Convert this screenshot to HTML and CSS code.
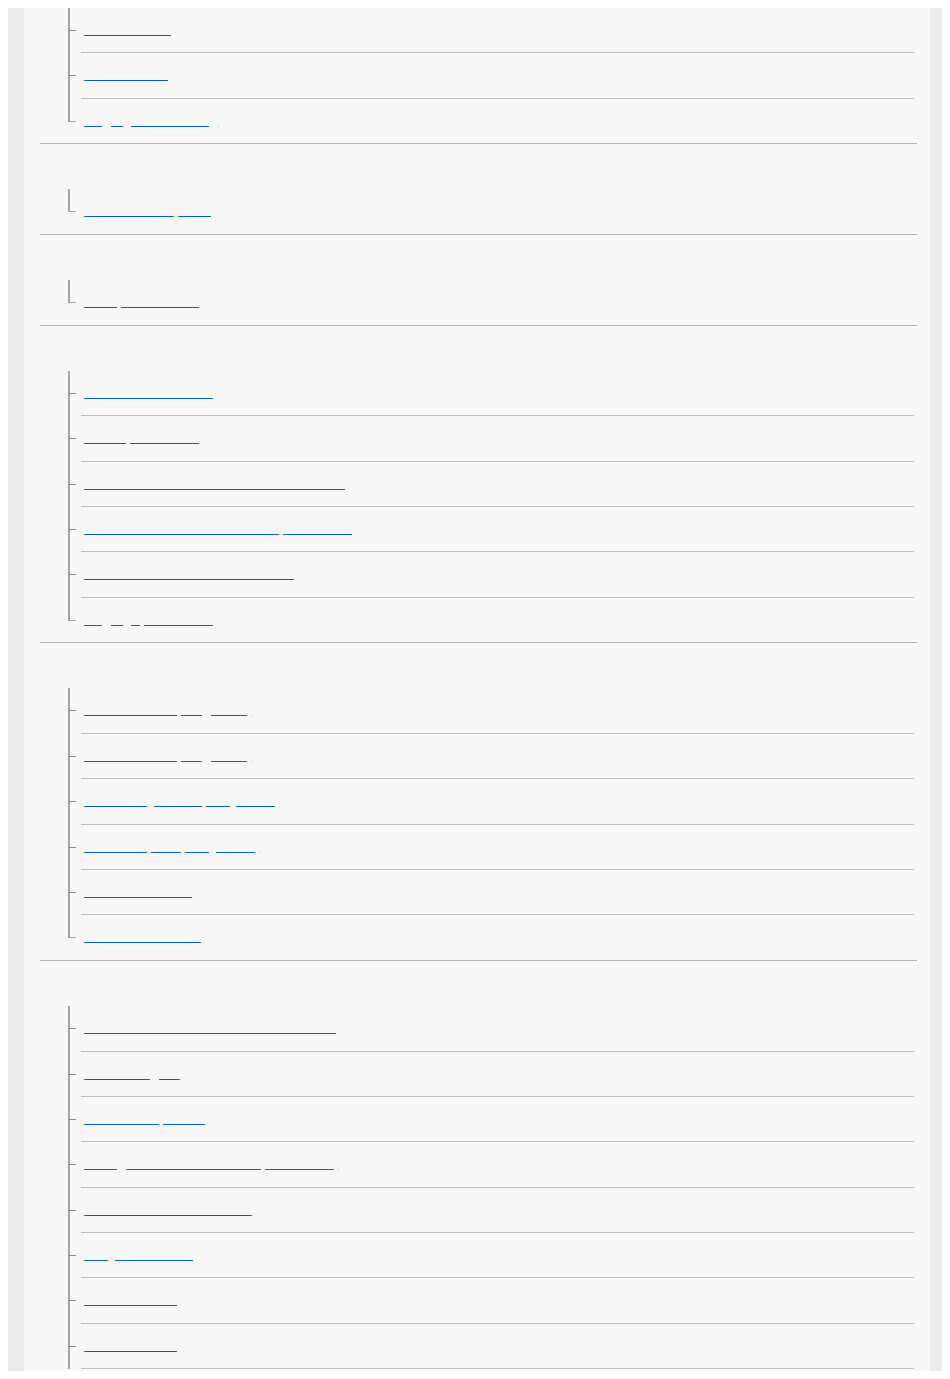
FILE: index.html
```html
<!DOCTYPE html>
<html lang="en">
<head>
    <meta charset="UTF-8">
    <meta content="width=device-width, initial-scale=1.0" name="viewport">
    <title>Help Guide</title>
    <link rel="stylesheet" href="styles.css">
</head>
<body>
<div class="help-frame">
    <div class="help-panel">
        <section class="toc-group cont">
            <ul class="toc-list">
                <li class="toc-item"><div class="toc-row"><a class="link" href="#"><span class="seg">abcdefghijabcdefghijabcdefghi</span></a></div></li>
                <li class="toc-item"><div class="toc-row"><a class="link" href="#"><span class="seg">abcdefghijabcdefghijabcdefgh</span></a></div></li>
                <li class="toc-item"><div class="toc-row"><a class="link" href="#"><span class="seg">abcdef</span><span class="seg wide">abcd</span><span class="seg wide">abcdefghijabcdefghijabcdef</span><span class="seg wide dot"></span></a></div></li>
            </ul>
        </section>
        <section class="toc-group">
            <ul class="toc-list">
                <li class="toc-item"><div class="toc-row"><a class="link" href="#"><span class="seg">abcdefghijabcdefghijabcdefghij</span><span class="seg">abcdefghija</span></a></div></li>
            </ul>
        </section>
        <section class="toc-group">
            <ul class="toc-list">
                <li class="toc-item"><div class="toc-row"><a class="link" href="#"><span class="seg">abcdefghija</span><span class="seg">abcdefghijabcdefghijabcdef</span></a></div></li>
            </ul>
        </section>
        <section class="toc-group">
            <ul class="toc-list">
                <li class="toc-item"><div class="toc-row"><a class="link" href="#"><span class="seg">abcdefghijabcdefghijabcdefghijabcdefghijabc</span></a></div></li>
                <li class="toc-item"><div class="toc-row"><a class="link" href="#"><span class="seg">abcdefghijabcd</span><span class="seg">abcdefghijabcdefghijabc</span></a></div></li>
                <li class="toc-item"><div class="toc-row"><a class="link" href="#"><span class="seg">abcdefghijabcdefghijabcdefghijabcdefghijabcdefghijabcdefghijabcdefghijabcdefghijabcdefg</span></a></div></li>
                <li class="toc-item"><div class="toc-row"><a class="link" href="#"><span class="seg">abcdefghijabcdefghijabcdefghijabcdefghijabcdefghijabcdefghijabcde</span><span class="seg">abcdefghijabcdefghijabc</span></a></div></li>
                <li class="toc-item"><div class="toc-row"><a class="link" href="#"><span class="seg">abcdefghijabcdefghijabcdefghijabcdefghijabcdefghijabcdefghijabcdefghij</span></a></div></li>
                <li class="toc-item"><div class="toc-row"><a class="link" href="#"><span class="seg">abcdef</span><span class="seg wide">abcd</span><span class="seg wide">abc</span><span class="seg">abcdefghijabcdefghijabc</span></a></div></li>
            </ul>
        </section>
        <section class="toc-group">
            <ul class="toc-list">
                <li class="toc-item"><div class="toc-row"><a class="link" href="#"><span class="seg">abcdefghijabcdefghijabcdefghija</span><span class="seg">abcdefg</span><span class="seg wide">abcdefghijab</span><span class="seg dot"></span></a></div></li>
                <li class="toc-item"><div class="toc-row"><a class="link" href="#"><span class="seg">abcdefghijabcdefghijabcdefghija</span><span class="seg">abcdefg</span><span class="seg wide">abcdefghijab</span><span class="seg dot"></span></a></div></li>
                <li class="toc-item"><div class="toc-row"><a class="link" href="#"><span class="seg">abcdefghijabcdefghija</span><span class="seg mid">abcdefghijabcdef</span><span class="seg">abcdefgh</span><span class="seg mid">abcdefghijabc</span><span class="seg dot"></span></a></div></li>
                <li class="toc-item"><div class="toc-row"><a class="link" href="#"><span class="seg">abcdefghijabcdefghija</span><span class="seg">abcdefghij</span><span class="seg">abcdefgh</span><span class="seg mid">abcdefghijabc</span><span class="seg dot"></span></a></div></li>
                <li class="toc-item"><div class="toc-row"><a class="link" href="#"><span class="seg">abcdefghijabcdefghijabcdefghijabcdef</span></a></div></li>
                <li class="toc-item"><div class="toc-row"><a class="link" href="#"><span class="seg">abcdefghijabcdefghijabcdefghijabcdefghi</span></a></div></li>
            </ul>
        </section>
        <section class="toc-group open">
            <ul class="toc-list">
                <li class="toc-item"><div class="toc-row"><a class="link" href="#"><span class="seg">abcdefghijabcdefghijabcdefghijabcdefghijabcdefghijabcdefghijabcdefghijabcdefghijabcd</span></a></div></li>
                <li class="toc-item"><div class="toc-row"><a class="link" href="#"><span class="seg">abcdefghijabcdefghijab</span><span class="seg wide">abcdefg</span></a></div></li>
                <li class="toc-item"><div class="toc-row"><a class="link" href="#"><span class="seg">abcdefghijabcdefghijabcde</span><span class="seg">abcdefghijabcd</span></a></div></li>
                <li class="toc-item"><div class="toc-row"><a class="link" href="#"><span class="seg">abcdefghija</span><span class="seg wide">abcdefghijabcdefghijabcdefghijabcdefghijabcde</span><span class="seg">abcdefghijabcdefghijabc</span><span class="seg dot"></span></a></div></li>
                <li class="toc-item"><div class="toc-row"><a class="link" href="#"><span class="seg">abcdefghijabcdefghijabcdefghijabcdefghijabcdefghijabcdef</span></a></div></li>
                <li class="toc-item"><div class="toc-row"><a class="link" href="#"><span class="seg">abcdefgh</span><span class="seg mid">abcdefghijabcdefghijabcdef</span></a></div></li>
                <li class="toc-item"><div class="toc-row"><a class="link" href="#"><span class="seg">abcdefghijabcdefghijabcdefghija</span></a></div></li>
                <li class="toc-item"><div class="toc-row"><a class="link" href="#"><span class="seg">abcdefghijabcdefghijabcdefghija</span></a></div></li>
            </ul>
        </section>
    </div>
</div>
</body>
</html>
```

FILE: styles.css
```css
body {
    margin: 8px;
    background: #fff;
    font-family: "Liberation Sans", Arial, sans-serif;
}

.help-frame {
    height: 1363px;
    overflow: hidden;
    background: #ebebeb;
    padding: 0 12px 0 16px;
}

.help-panel {
    height: 100%;
    background: #f7f7f7;
    overflow: hidden;
}

.toc-group {
    margin: 0 13px 0 16px;
    padding-top: 45.3px;
    border-bottom: 1px solid #b2b2b2;
}

.toc-group.cont {
    padding-top: 0;
}

/* list runs on past the bottom of the panel */
.toc-group.open {
    border-bottom: 0;
}

.toc-list {
    list-style: none;
    margin: 0 0 0 28px;
    padding: 0;
}

.toc-item {
    position: relative;
    padding-left: 13px;
}

/* tree lines */
.toc-item::before {
    content: "";
    position: absolute;
    left: 0;
    top: 0;
    bottom: 0;
    width: 2px;
    background: #a6a6a6;
}

.toc-item::after {
    content: "";
    position: absolute;
    left: 0;
    top: 22px;
    width: 8px;
    height: 1px;
    background: #8a8a8a;
}

.toc-group:not(.open) .toc-item:last-child::before {
    bottom: auto;
    height: 23px;
}

.toc-group:not(.open) .toc-item:last-child::after {
    background: #a6a6a6;
}

.toc-row {
    display: flex;
    align-items: flex-start;
    box-sizing: border-box;
    height: 45.4px;
    margin-right: 3px;
    padding: 15px 0 0 3px;
    border-bottom: 1px solid #bfbfbf;
}

.toc-group:not(.open) .toc-item:last-child .toc-row {
    height: 44.4px;
    border-bottom: 0;
}

.link {
    display: flex;
    align-items: flex-start;
    text-decoration: none;
}

.seg {
    font: 5px/12px "Liberation Mono", monospace;
    color: transparent;
    white-space: nowrap;
    border-bottom: 1px solid #0a5fd0;
}

.seg + .seg {
    margin-left: 4px;
}

.seg.mid {
    margin-left: 6.5px;
}

.seg.wide {
    margin-left: 8.5px;
}

.seg.dot {
    width: 1px;
    height: 12px;
    border-bottom-color: #a9c4ec;
}
```
